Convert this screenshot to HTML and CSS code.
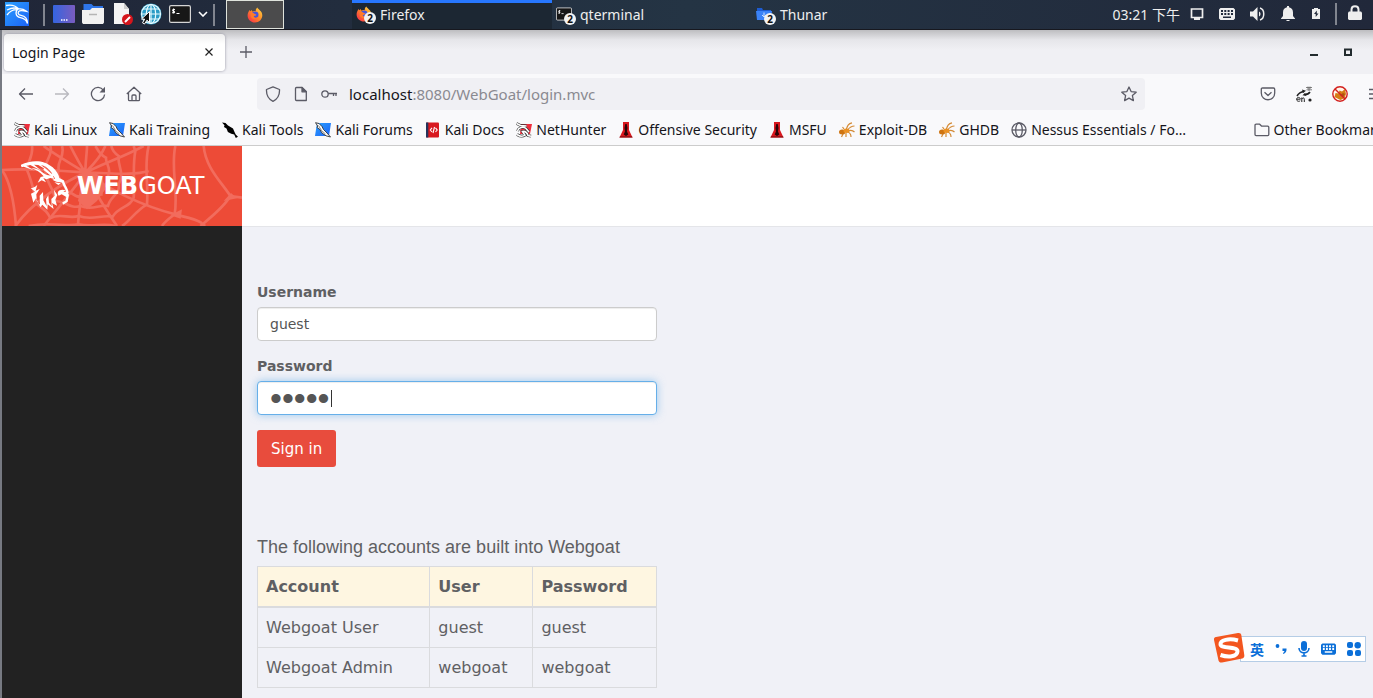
FILE: index.html
```html
<!DOCTYPE html>
<html lang="en">
<head>
    <meta charset="UTF-8">
    <meta name="viewport" content="width=device-width, initial-scale=1.0">
    <title>Login Page</title>
    <link rel="stylesheet" href="styles.css">
</head>
<body>
    <svg class="sprite" aria-hidden="true">
        <defs>
            <linearGradient id="kaliBlue" x1="0" y1="0" x2="1" y2="1">
                <stop offset="0" stop-color="#2aa0ff"/><stop offset="1" stop-color="#1c62f5"/>
            </linearGradient>
            <linearGradient id="deskGrad" x1="0" y1="0" x2="1" y2="0">
                <stop offset="0" stop-color="#3465e0"/><stop offset="1" stop-color="#7a5cc0"/>
            </linearGradient>
            <linearGradient id="foxGrad" x1="1" y1="0" x2="0" y2="1">
                <stop offset="0" stop-color="#ffe14a"/><stop offset=".45" stop-color="#ff8a26"/><stop offset="1" stop-color="#f5224f"/>
            </linearGradient>
        </defs>
        <symbol id="firefox" viewBox="0 0 16 16">
            <path fill="url(#foxGrad)" d="M1 6l1.400-3 .9 1.300L4.800 3l.4 1.600C6.500 4 7.600 3.800 8.800 4.200 8.600 3 9 1.500 10.400.6c.2 1.900 4.900 3.200 4.900 7.700 0 4.100-3.200 7.200-7.300 7.200S.6 12.400.6 8.700C.6 7.700.7 6.800 1 6z"/>
            <circle cx="8.200" cy="7.800" r="3.300" fill="#4456dc"/>
            <path fill="#ff7a2a" d="M3.500 6.200c1.500-.8 3-.5 3.900.6.6.7 2 .3 2 1.100-.9.9-2.200.5-2.600 1.700.6 1.700 3.600 1.500 4.700-.6.4 3.200-6.300 4.600-7.700.8z"/>
        </symbol>
        <symbol id="term" viewBox="0 0 22 18">
            <rect x=".6" y=".6" width="20.800" height="16.800" rx="1.500" fill="#171717" stroke="#d5d5d5" stroke-width="1.200"/>
            <path d="M6 4.500c-2.500-.8-3 1.300-1.500 1.700s1.700 2-1.500 1.500M4.600 3.500v5M7.500 8.500h3" fill="none" stroke="#fff" stroke-width="1.100"/>
        </symbol>
        <symbol id="dragon" viewBox="0 0 16 16">
            <path fill="#fff" stroke="#333" stroke-width=".9" d="M.5.700l3.500.8 3 3 1.500 3 3.500 3.500 3.500 4-4.500-1.200-4-2.800L4.500 7 2 5.500 2.700 4z"/>
            <path fill="none" stroke="#555" stroke-width=".7" d="M3.500 3.500l3 5 4 3.500"/>
        </symbol>
        <symbol id="bmBlue" viewBox="0 0 16 16">
            <path fill="url(#kaliBlue)" d="M2 1h14l-2 13H0z"/><use href="#dragon"/>
        </symbol>
        <symbol id="bmRed" viewBox="0 0 16 16">
            <path fill="#ee2f3d" d="M5 2h11l-2 10H4z"/>
            <path d="M.5 1.500l4 2 6 .5M1.500 9C2.500 5.500 7 4 10 6.500l3 3.500M1 12.500c3 2 6 2 8 .7L6.500 9.500c2.500-.5 4.500 1 5.500 4l3 .7" fill="none" stroke="#333" stroke-width="2.800"/>
            <path d="M.5 1.500l4 2 6 .5M1.500 9C2.500 5.500 7 4 10 6.500l3 3.500M1 12.500c3 2 6 2 8 .7L6.500 9.500c2.500-.5 4.500 1 5.500 4l3 .7" fill="none" stroke="#fff" stroke-width="1.600"/>
        </symbol>
        <symbol id="tools" viewBox="0 0 16 16">
            <path d="M0 .5L3.500 1l2.500 2.500L8.500 5l2.500 1.500 1.500 3.500 1.200 2.500 2.300 2.300-2.200 1.200-1.600-3.500-3-.7-3.300-1.800L4.500 6.500 2 5l.5-1.800z"/>
        </symbol>
        <symbol id="docs" viewBox="0 0 14 16">
            <rect x="0" y=".5" width="13" height="15" rx="1" fill="#d81920"/><path fill="#26345c" d="M0 .5h2.300v15H0z"/>
            <path d="M6 5.800L4.300 8 6 10M9.500 5.800L11.200 8 9.500 10M8.500 5L7 11" stroke="#fff" stroke-width="1.100" fill="none"/>
        </symbol>
        <symbol id="offsec" viewBox="0 0 16 16">
            <path fill="#d9181f" d="M5 0h6v8l3.500 7.500h-13L5 8z"/>
            <path fill="#2a0508" d="M7.300 2h1.400l.8 4-.5 3.500 1.300 3L8 14l-2.300-1.500 1.300-3L6.500 6z"/>
            <path fill="#8a1014" d="M2 14.200h12l.6 1.300H1.400z"/>
        </symbol>
        <symbol id="ant" viewBox="0 0 16 16">
            <path d="M7 8C8.500 4 9 1.500 13 .8M8.500 8c2-2.500 4-4 7-4M9 9c3-1.500 5-.5 6.500 1M8.500 10c2 .5 3.500 2.500 3.500 5M5 10l-2.500 5M7 11v4M5 7L3.500 5" fill="none" stroke="#d48a35" stroke-width="1.200"/>
            <ellipse cx="3.200" cy="10" rx="3.200" ry="2.500" fill="#ce7411"/><ellipse cx="7.500" cy="8.800" rx="3" ry="2.200" fill="#eb9123"/>
        </symbol>
        <symbol id="keyboard" viewBox="0 0 16 12">
            <path fill-rule="evenodd" fill="currentColor" d="M1.500 0h13L16 1.500v9L14.500 12h-13L0 10.500v-9zM2 2v2h2V2zm3.300 0v2h2V2zm3.300 0v2h2V2zM12 2v2h2V2zM2 5v2h2V5zm3.300 0v2h2V5zm3.300 0v2h2V5zM12 5v2h2V5zM4 8.500V10h8V8.500z"/>
        </symbol>
    </svg>

    <header class="panel">
        <button class="panel-btn" aria-label="Applications">
            <svg width="24" height="24" viewBox="0 0 24 24"><rect width="24" height="24" fill="url(#kaliBlue)"/><path d="M1 3.500c5-1 9-.4 12.500 3.200M2 8c4-2 8-3 11-.8M13.500 6.700c3.500.1 5.500.4 8 2.600-2.500-.5-4.500-.9-7-.4-2.200.8-1.800 4.200 1.500 4.500 4.200.6 6.400 3.300 6.500 8-1.500-4-3.800-5.100-7-5.700-5.500-1-5.600-6.800-2-9M2 13c3-4 6-5.500 10-5.300" fill="none" stroke="#fff" stroke-width="1.300"/></svg>
        </button>
        <span class="sep"></span>
        <div class="launchers">
            <button class="panel-btn" aria-label="Show Desktop"><svg width="22" height="18" viewBox="0 0 22 18"><rect width="22" height="18" rx="1" fill="url(#deskGrad)"/><path d="M8 15h1.500M10.500 15H12m1 0h1.500" stroke="#fff" stroke-width="1.500"/></svg></button>
            <button class="panel-btn" aria-label="Files"><svg width="22" height="20" viewBox="0 0 22 20"><path fill="#2e75e8" d="M1.500 0h8l2 2H21v6H1.500z"/><path fill="#f1f1f1" d="M0 6h8l2-2h12v14.500L21 20H1l-1-1.500z"/><path d="M7 10.500h8" stroke="#b5b5b5" stroke-width="1.500"/></svg></button>
            <button class="panel-btn" aria-label="Text Editor"><svg width="22" height="22" viewBox="0 0 22 22"><path fill="#f4f4f4" d="M3 0h10l5 6v15H3z"/><path fill="#cdcdcd" d="M13 0l5 6h-5z"/><circle cx="16.500" cy="16.500" r="5.500" fill="#d5151c"/><path d="M14 19l5-5" stroke="#fff" stroke-width="2"/></svg></button>
            <button class="panel-btn" aria-label="Web Browser"><svg width="22" height="22" viewBox="0 0 22 22"><circle cx="11" cy="11" r="10.500" fill="#2a9bc5"/><g fill="none" stroke="#e8fbff" stroke-width="1.200"><circle cx="11" cy="11" r="9.500"/><ellipse cx="11" cy="11" rx="4.700" ry="9.500"/><path d="M11 1.500v19M1.500 11h19M3 6h16M3 16h16"/></g><path fill="#111" stroke="#fff" d="M9.500 8.500v11l-2.600-2.300L4.500 21l-2-1.200 2.200-3.600L1.500 16z"/></svg></button>
            <button class="panel-btn" aria-label="Terminal"><svg width="22" height="18"><use href="#term"/></svg></button>
            <button class="panel-btn" aria-label="More terminals"><svg width="10" height="6" viewBox="0 0 10 6"><path d="M1 1l4 4 4-4" fill="none" stroke="#fff" stroke-width="1.600"/></svg></button>
        </div>
        <span class="sep"></span>
        <button class="workspace" aria-label="Workspace 1"><svg width="16" height="16"><use href="#firefox"/></svg></button>
        <nav class="tasks">
            <button class="task active"><span class="task-icon"><svg width="16" height="16"><use href="#firefox"/></svg><span class="count">2</span></span>Firefox</button>
            <button class="task"><span class="task-icon"><svg width="16" height="14"><use href="#term"/></svg><span class="count">2</span></span>qterminal</button>
            <button class="task"><span class="task-icon"><svg width="16" height="14" viewBox="0 0 16 14"><path fill="#1d5bd0" d="M1 1h5l1 2h8v3H1z"/><path fill="#3a82f7" d="M0 4h16l-1 9H1z"/><path d="M8 5.500v4M6 8l2 2 2-2" stroke="#cfe2ff" fill="none"/></svg><span class="count">2</span></span>Thunar</button>
        </nav>
        <div class="tray">
            <time>03:21 下午</time>
            <svg width="14" height="12" viewBox="0 0 14 12"><path d="M1.500 1h11v8.500h-11z" fill="none" stroke="#eee" stroke-width="1.700"/><path fill="#eee" d="M4 9.500h6V12H4z"/></svg>
            <svg width="16" height="12"><use href="#keyboard"/></svg>
            <svg width="16" height="14" viewBox="0 0 16 14"><path fill="#eee" d="M0 4.500h3L7.500 0v14L3 9.500H0zM9 4.500c2 .8 2 4.200 0 5z"/><path d="M10 1c5 1.500 5 10.500 0 12" fill="none" stroke="#eee" stroke-width="1.500"/></svg>
            <svg width="14" height="15" viewBox="0 0 14 15"><path fill="#eee" d="M6 0h2v1.300c2.700.5 4 2.400 4 5.200v3.500l2 2.500v.5H0v-.5L2 10V6.500c0-2.800 1.300-4.700 4-5.200zM5 14h4l-1 1H6z"/></svg>
            <svg width="10" height="11" viewBox="-2 0 10 11"><path fill="#eee" d="M2 0h4v1h2v10H0V1h2z"/><path fill="#222a3a" d="M4.800 2.500L2 6h1.700v3L6.500 5.500H4.800z"/></svg>
            <span class="sep"></span>
            <button class="panel-btn" aria-label="Lock screen"><svg width="14" height="15" viewBox="0 0 14 15"><path fill="#eee" d="M1 6.500h12l1 1V14l-1 1H1l-1-1V7.500z"/><path d="M3.500 7V4.500c0-4.500 7-4.500 7 0V7" fill="none" stroke="#eee" stroke-width="2"/></svg></button>
        </div>
    </header>

    <div class="window">
        <div class="chrome">
            <div class="tab-strip">
                <div class="tab">Login Page
                    <button class="icon-btn" aria-label="Close tab"><svg width="8" height="8" viewBox="0 0 8 8"><path d="M.5.5l7 7m0-7l-7 7" stroke="#222" stroke-width="1.200"/></svg></button>
                </div>
                <button class="icon-btn" aria-label="New tab"><svg width="12" height="12" viewBox="0 0 12 12"><path d="M6 0v12M0 6h12" stroke="#5b5b66" stroke-width="1.300"/></svg></button>
                <div class="win-buttons">
                    <button class="icon-btn" aria-label="Minimize"><svg width="8" height="8" viewBox="0 0 8 8"><path fill="#222b2e" d="M0 6h8v2H0z"/></svg></button>
                    <button class="icon-btn" aria-label="Maximize"><svg width="8" height="8" viewBox="0 0 8 8"><path d="M1 1.500h6V7H1z" fill="none" stroke="#222b2e" stroke-width="2"/></svg></button>
                </div>
            </div>
            <div class="nav-bar">
                <div class="nav-buttons">
                    <button class="icon-btn" aria-label="Back"><svg class="line" width="16" height="16" viewBox="0 0 16 16"><path d="M15 8H1.500M7 2.500L1.500 8 7 13.500"/></svg></button>
                    <button class="icon-btn" aria-label="Forward" disabled><svg class="line" width="16" height="16" viewBox="0 0 16 16"><path d="M1 8h13.500M9 2.500L14.500 8 9 13.500"/></svg></button>
                    <button class="icon-btn" aria-label="Reload"><svg class="line" width="16" height="16" viewBox="0 0 16 16"><path d="M13.500 4.300A6.600 6.600 0 1 0 14.600 8.500"/><path fill="#5b5b66" stroke="none" d="M15 .8v5.700H9.500z"/></svg></button>
                    <button class="icon-btn" aria-label="Home"><svg class="line" width="16" height="16" viewBox="0 0 16 16"><path d="M.8 8L8 1.200 15.200 8M2.500 7v6.500c0 .8.300 1.200 1 1.200h9c.7 0 1-.4 1-1.200V7M6 14.500V10c0-.7.300-1 1-1h2c.7 0 1 .3 1 1v4.500"/></svg></button>
                </div>
                <div class="url-bar">
                    <svg class="line" width="16" height="16" viewBox="0 0 16 16"><path d="M8 .8l6.500 2.700c.3 5.500-1.600 9.500-6.500 11.800C3.100 13 1.200 9 1.500 3.500z"/></svg>
                    <svg class="line" width="16" height="16" viewBox="0 0 16 16"><path d="M3.500 1.500H9l4.300 4.300v8.700H3.500c-.7 0-1-.3-1-1v-11c0-.7.300-1 1-1z"/><path fill="#5b5b66" d="M9 1.500v4.300h4.300z"/></svg>
                    <svg class="line" width="16" height="16" viewBox="0 0 16 16"><circle cx="4" cy="8" r="3.200"/><path d="M7.200 7.500H16M12.500 7.500V10M15 7.500V10"/></svg>
                    <span class="url"><b>localhost</b>:8080/WebGoat/login.mvc</span>
                    <button class="icon-btn star" aria-label="Bookmark this page"><svg class="line" width="16" height="16" viewBox="0 0 16 16"><path d="M8 1l2.100 4.600 5.100.6-3.800 3.400 1 5L8 12.100l-4.400 2.500 1-5L.8 6.200l5.100-.6z"/></svg></button>
                </div>
                <div class="extensions">
                    <button class="icon-btn" aria-label="Pocket"><svg class="line" width="16" height="16" viewBox="0 0 16 16"><path d="M2.500 2h11c.7 0 1.200.4 1.200 1.200V7c0 9-13.400 9-13.400 0V3.200C1.300 2.400 1.800 2 2.500 2zM4.500 6.300L8 9.500l3.500-3.200"/></svg></button>
                    <button class="icon-btn" aria-label="Translate"><svg width="16" height="16" viewBox="0 0 16 16"><path d="M1 10c1.500-2.500 3.500-4 7-4.500M8.500 8.500c2.500 0 4.500-.8 5.500-2.500" fill="none" stroke="#222" stroke-width="1.500"/><path fill="#222" d="M6 3.500l4 1.200L7 7zM9 7l1.500 3-4-.7z"/><path d="M10 1.500h6M12 .5V3m2-2.500V3M10.500 3.800H16M13 2v3" stroke="#666" stroke-width=".8"/><path d="M.7 13.200h3.600c0-2.400-3.600-2.400-3.600 0 0 2.500 2.500 2.500 3.500 1.500M5.800 16v-4.500M5.800 13c1-1.500 2.500-1.500 2.500.3V16" fill="none" stroke="#222"/><circle cx="14" cy="14" r="1.600" fill="#222"/></svg></button>
                    <button class="icon-btn" aria-label="Cookie blocker"><svg width="16" height="16" viewBox="0 0 16 16"><circle cx="8" cy="8" r="7.300" fill="#fff6ea"/><path fill="#d67c14" d="M2.500 11l1-4 3 .5 1-3 2.500 1L13 3l1 5-1.500 4-4 2z"/><path fill="#ad530d" d="M8 9l3-2 2 1-2 3z"/><circle cx="8" cy="8" r="7.200" fill="none" stroke="#d3211f" stroke-width="1.400"/><path d="M3 3l10 10" stroke="#d3211f" stroke-width="1.400"/></svg></button>
                    <button class="icon-btn" aria-label="Open menu"><svg class="line" width="16" height="16" viewBox="0 0 16 16"><path d="M1 3.500h14M1 8h14M1 12.500h14"/></svg></button>
                </div>
            </div>
            <nav class="bookmarks">
                <a href="#"><svg width="16" height="16"><use href="#bmRed"/></svg>Kali Linux</a>
                <a href="#"><svg width="16" height="16"><use href="#bmBlue"/></svg>Kali Training</a>
                <a href="#"><svg width="16" height="16"><use href="#tools"/></svg>Kali Tools</a>
                <a href="#"><svg width="16" height="16"><use href="#bmBlue"/></svg>Kali Forums</a>
                <a href="#"><svg width="16" height="16"><use href="#docs"/></svg>Kali Docs</a>
                <a href="#"><svg width="16" height="16"><use href="#bmRed"/></svg>NetHunter</a>
                <a href="#"><svg width="16" height="16"><use href="#offsec"/></svg>Offensive Security</a>
                <a href="#"><svg width="16" height="16"><use href="#offsec"/></svg>MSFU</a>
                <a href="#"><svg width="16" height="16"><use href="#ant"/></svg>Exploit-DB</a>
                <a href="#"><svg width="16" height="16"><use href="#ant"/></svg>GHDB</a>
                <a href="#"><svg class="line" width="16" height="16" viewBox="0 0 16 16"><circle cx="8" cy="8" r="7"/><ellipse cx="8" cy="8" rx="3.300" ry="7"/><path d="M1 8h14"/></svg>Nessus Essentials / Fo…</a>
                <a href="#" class="other"><svg class="line" width="16" height="16" viewBox="0 0 16 16"><path d="M1 12.500V3.300c0-.7.400-1.100 1.100-1.100h3.600l2 2h6c.7 0 1.100.4 1.100 1.100v7.200c0 .7-.4 1.100-1.100 1.100H2.100c-.7 0-1.100-.4-1.100-1.100z"/></svg>Other Bookmarks</a>
            </nav>
        </div>

        <div class="page">
            <aside class="sidebar">
                <a href="#" class="brand">
                    <svg class="web" viewBox="0 0 720 240" preserveAspectRatio="none" aria-hidden="true">
                        <g fill="none" stroke="#f26c5d" stroke-width="8">
                            <!-- strands -->
                            <path d="M250 80C200 50 150 20 125 0M250 80C230 50 215 20 205 0M250 80C250 50 255 20 255 0M250 80C280 50 300 25 310 0M250 80C310 50 370 30 425 0M250 80C190 75 90 65 0 72M250 80C180 110 90 170 40 240M250 80C215 130 165 190 125 240M250 80C240 140 230 190 228 240M250 80C280 140 310 190 345 240M250 80C320 130 420 180 520 205S590 230 610 240M250 80C320 80 390 90 440 75"/>
                            <!-- rings -->
                            <path d="M180 0C190 30 165 45 170 70C160 100 190 105 192 135C210 135 220 160 242 150C265 165 280 145 298 145C298 120 325 115 318 90C330 65 310 55 312 35C290 25 285 5 280 0"/>
                            <path d="M145 0C155 30 125 45 130 73C130 110 155 120 160 165C190 165 205 190 236 180C270 195 290 175 318 180C325 150 355 145 350 115C370 80 345 60 350 30C335 20 330 10 328 0"/>
                            <path d="M90 0C95 30 75 50 75 72C90 105 95 135 105 175C125 190 135 195 145 216C175 200 200 220 230 210C270 225 300 205 332 212C350 180 385 185 395 155C400 110 390 70 400 15L395 0"/>
                            <path d="M0 72C20 100 35 150 42 240M440 0C425 60 440 110 435 175C400 195 385 225 360 240M80 240C150 225 190 245 230 235C270 245 300 230 340 240"/>
                            <path d="M520 0C505 70 530 130 518 205C505 215 490 225 480 240M605 0C610 65 660 110 685 150L720 155M685 150C665 185 625 215 595 240"/>
                        </g>
                        <path fill="#f26c5d" d="M240 95L262 75 300 90 310 130 285 165 255 190 228 165zM505 208l35-18-4 28zM665 165l22-24 18 16z"/>
                    </svg>
                    <svg class="goat" viewBox="0 0 150 150" aria-hidden="true">
                        <g fill="#fff">
                            <path d="M-1 12C30-4 68-5 95 19c12 11 18 22 20 32l13 7-2 7-20-3-12-6 8-3C96 38 80 15 60 12l22 18-30-18-13-1 22 18L28 12l-12 2 22 14L8 17l-6 2z"/>
                            <path d="M30 21c16 0 28 7 38 16 8 6 18 7 24 6l-6-8 9 7 5 12-12-3-12 4-9-4 8 13-13-6-12 7 9-17 9-2C58 34 46 26 30 21z"/>
                            <path d="M70 20l24 20-3-14 10 19-10 1-24-20zM100 64l20 3-8 5z"/>
                            <path d="M122 60l7-2c3 16 13 24 14 39l-8 5-7-5 7-1c1-13-11-20-13-36z"/>
                            <path d="M134 88c-18-6-29 5-21 16l9-4 14 8-3 11-9 5 2 7 14-8 4-22-7-8-10-1z"/>
                            <path d="M29 81c5 0 15-3 20-10l-5 18 12-5-10 16 1 20 10 11-1-27 10-11 1 25 10 18-2-22 7-11 2 22 8 11-1-22 10-10-2-17 10 15-6 14 5 18-15-8 5 18-18-14-1 16-15-15-6 8-13-27-8 13L30 98l12-6z"/>
                        </g>
                    </svg>
                    <span class="brand-name"><b>WEB</b>GOAT</span>
                </a>
            </aside>
            <div class="main">
                <div class="top-bar"></div>
                <main class="content">
                    <form class="login-form">
                        <label for="username">Username</label>
                        <input class="form-control" id="username" type="text" value="guest" autocomplete="off">
                        <label for="password">Password</label>
                        <div class="password-field">
                            <input class="form-control focused" id="password" type="password" value="guest" autocomplete="off" autofocus>
                            <span class="caret"></span>
                        </div>
                        <button class="btn" type="button">Sign in</button>
                    </form>
                    <h4>The following accounts are built into Webgoat</h4>
                    <table class="accounts">
                        <thead>
                            <tr><th>Account</th><th>User</th><th>Password</th></tr>
                        </thead>
                        <tbody>
                            <tr><td>Webgoat User</td><td>guest</td><td>guest</td></tr>
                            <tr><td>Webgoat Admin</td><td>webgoat</td><td>webgoat</td></tr>
                        </tbody>
                    </table>
                </main>
            </div>
        </div>
    </div>

    <div class="ime">
        <svg class="ime-logo" viewBox="0 0 32 32" aria-hidden="true"><path fill="#f3561f" d="M3 5l22-4c2-.3 3 .5 3.300 2l3 20c.3 2-.5 3-2 3.500L9 30.500c-2 .3-3-.5-3.500-2L1 8c-.3-1.800.5-2.700 2-3z"/><path d="M25 8.500C16 6 7 8 7.500 12.500S25 14 24.500 19.500 15 25.500 7.500 23" fill="none" stroke="#fff" stroke-width="4"/></svg>
        <span class="ime-lang">英</span>
        <svg width="12" height="14" viewBox="0 0 12 14"><circle cx="2.500" cy="4" r="1.900"/><path d="M7.500 6.500h4c.3 2.500-.5 4.500-3 5.500l-.6-1c1-.5 1.400-1 1.400-2H7.500z"/></svg>
        <svg width="12" height="16" viewBox="0 0 12 16"><rect x="3" width="6" height="10" rx="3"/><path d="M1 7c0 6.500 10 6.500 10 0M6 12v3M3.500 15h5" fill="none" stroke="#0b6fd8" stroke-width="1.600"/></svg>
        <svg width="15" height="12"><use href="#keyboard"/></svg>
        <svg width="14" height="14" viewBox="0 0 14 14"><rect width="6" height="6" rx="2"/><circle cx="10.700" cy="3.200" r="3.200"/><rect y="8" width="6" height="6" rx="2"/><rect x="8" y="8" width="6" height="6" rx="2"/></svg>
    </div>
</body>
</html>
```
FILE: styles.css
```css
* {
    box-sizing: border-box;
}
body {
    margin: 0;
    height: 100vh;
    display: flex;
    flex-direction: column;
    overflow: hidden;
    font-family: 'Noto Sans', 'Noto Sans CJK SC', sans-serif;
    font-size: 14px;
    color: #15141a;
}
button {
    font: inherit;
    color: inherit;
    border: none;
    background: none;
    padding: 0;
    cursor: pointer;
}
svg {
    display: block;
    flex: none;
}
.sprite {
    position: absolute;
    width: 0;
    height: 0;
}

/* desktop panel */
.panel {
    display: flex;
    align-items: center;
    height: 30px;
    flex: none;
    padding: 0 11px 0 5px;
    color: #eee;
    background: linear-gradient(90deg, #202638, #243444 50%, #21283a);
    border-bottom: 1px solid #17181f;
}
.panel-btn {
    padding-bottom: 2px;
}
.sep {
    width: 2px;
    height: 22px;
    background: #81858f;
    margin: 0 8px 0 14px;
}
.launchers {
    display: flex;
    align-items: center;
    gap: 7px;
}
.launchers + .sep {
    margin: 0 11px 0 5px;
}
.workspace {
    display: flex;
    align-items: center;
    justify-content: center;
    align-self: stretch;
    width: 58px;
    background: #4b4b4c;
    border: 1px solid #dfe3dc;
}
.tasks {
    display: flex;
    align-self: stretch;
    margin-left: 68px;
}
.task {
    display: flex;
    align-items: center;
    gap: 8px;
    width: 200px;
    padding: 0 0 4px 4px;
    border-top: 3px solid transparent;
}
.task.active {
    background: #1c2733;
    border-top-color: #2777ff;
}
.task-icon {
    position: relative;
    width: 16px;
}
.count {
    position: absolute;
    left: 8px;
    top: 6px;
    width: 12px;
    height: 12px;
    border-radius: 50%;
    background: #f2f2f2;
    color: #111;
    font-size: 10px;
    font-weight: bold;
    line-height: 12px;
    text-align: center;
}
.tray {
    display: flex;
    align-items: center;
    gap: 15px;
    margin-left: auto;
    padding-bottom: 2px;
}
.tray time {
    margin-right: -5px;
}
.tray .sep {
    margin: 0 -4px 0 0;
}

/* browser window */
.window {
    flex: 1;
    min-height: 0;
    display: flex;
    flex-direction: column;
    border-left: 2px solid #777a82;
}
.chrome {
    margin-right: -24px;
    background: #f9f9fb;
    border-bottom: 1px solid #ccc;
}
.icon-btn {
    display: flex;
    align-items: center;
    justify-content: center;
}
.icon-btn:disabled {
    opacity: 0.4;
}
.line {
    fill: none;
    stroke: #5b5b66;
    stroke-width: 1.3;
    stroke-linejoin: round;
}
.tab-strip {
    display: flex;
    align-items: center;
    gap: 15px;
    height: 44px;
    padding-left: 2px;
    background: linear-gradient(#bdbdc0, #e6e6ea 10px, #f0f0f4 20px);
}
.tab {
    display: flex;
    align-items: center;
    justify-content: space-between;
    width: 221px;
    height: 37px;
    padding: 0 12px 0 8px;
    background: linear-gradient(#eee, #fff 10px);
    border-radius: 4px;
    box-shadow: 0 0 3px #8f8f9d;
}
.win-buttons {
    display: flex;
    gap: 26px;
    margin-left: auto;
    padding-right: 45px;
}
.nav-bar {
    display: flex;
    align-items: center;
    height: 40px;
    padding: 0 13px 0 16px;
}
.nav-buttons {
    display: flex;
    gap: 20px;
    width: 239px;
}
.url-bar {
    flex: 1;
    display: flex;
    align-items: center;
    gap: 12px;
    height: 32px;
    padding: 0 8px;
    background: #f0f0f4;
    border-radius: 4px;
}
.url {
    font-size: 15px;
    color: #8a8a91;
}
.url b {
    font-weight: normal;
    color: #15141a;
}
.star {
    margin-left: auto;
}
.extensions {
    display: flex;
    gap: 20px;
    margin-left: 115px;
}
.bookmarks {
    display: flex;
    align-items: center;
    height: 31px;
    gap: 12px;
    padding: 0 7px 0 12px;
}
.bookmarks a {
    display: flex;
    align-items: center;
    gap: 4px;
    color: inherit;
    text-decoration: none;
    white-space: nowrap;
}
.bookmarks .other {
    margin-left: auto;
}

/* webgoat page */
.page {
    flex: 1;
    min-height: 0;
    display: flex;
    font-family: 'DejaVu Sans', sans-serif;
    font-size: 16px;
    color: #5f6063;
}
.sidebar {
    width: 240px;
    flex: none;
    background: #222;
}
.brand {
    position: relative;
    display: flex;
    align-items: center;
    height: 80px;
    padding-left: 19px;
    background: #ed4b37;
    color: #fff;
    text-decoration: none;
}
.web {
    position: absolute;
    inset: 0;
    width: 100%;
    height: 100%;
}
.goat {
    position: relative;
    width: 50px;
    height: 50px;
    margin-right: 6px;
}
.brand-name {
    position: relative;
    font-size: 24px;
}
.main {
    flex: 1;
    background: #f0f1f7;
}
.top-bar {
    height: 81px;
    background: #fff;
    border-bottom: 1px solid #e4e5e9;
}
.content {
    width: 430px;
    padding: 55px 15px 0;
}
.login-form label {
    display: block;
    margin-bottom: 5px;
    font-size: 14px;
    line-height: 20px;
    font-weight: bold;
}
.form-control {
    display: block;
    width: 100%;
    height: 34px;
    margin-bottom: 15px;
    padding: 6px 12px;
    font: 14px 'DejaVu Sans', sans-serif;
    color: #555;
    background: #fff;
    border: 1px solid #ccc;
    border-radius: 4px;
    box-shadow: inset 0 1px 1px rgba(0, 0, 0, 0.075);
}
.form-control.focused {
    border-color: #66afe9;
    outline: 0;
    box-shadow: inset 0 1px 1px rgba(0, 0, 0, 0.075), 0 0 8px rgba(102, 175, 233, 0.6);
}
.password-field {
    position: relative;
}
#password {
    padding: 0 12px;
    font: 34px 'Liberation Sans', sans-serif;
    caret-color: transparent;
}
.caret {
    position: absolute;
    left: 74px;
    top: 9px;
    width: 1px;
    height: 17px;
    background: #333;
}
.btn {
    height: 37px;
    padding: 0 14px;
    font-size: 15px;
    color: #fff;
    background: #e84c3d;
    border-radius: 3px;
}
.content h4 {
    margin: 70px 0 9px;
    font: 18px/20px 'Liberation Sans', sans-serif;
}
.accounts {
    width: 100%;
    border-collapse: collapse;
    line-height: 23px;
}
.accounts th,
.accounts td {
    padding: 8px;
    text-align: left;
    border: 1px solid #dadbde;
}
.accounts th {
    background: #fef6e1;
    border-bottom-width: 2px;
}

/* input method bar */
.ime {
    position: fixed;
    right: 7px;
    bottom: 36px;
    display: flex;
    align-items: center;
    gap: 11px;
    height: 26px;
    padding: 0 4px 0 9px;
    background: #fff;
    border: 1px solid #b5cde6;
    color: #0b6fd8;
    fill: #0b6fd8;
}
.ime-logo {
    position: absolute;
    left: -28px;
    top: -5px;
    width: 32px;
    height: 32px;
}
.ime-lang {
    font-family: 'Noto Sans CJK SC', sans-serif;
    font-weight: bold;
    line-height: 20px;
}
```
